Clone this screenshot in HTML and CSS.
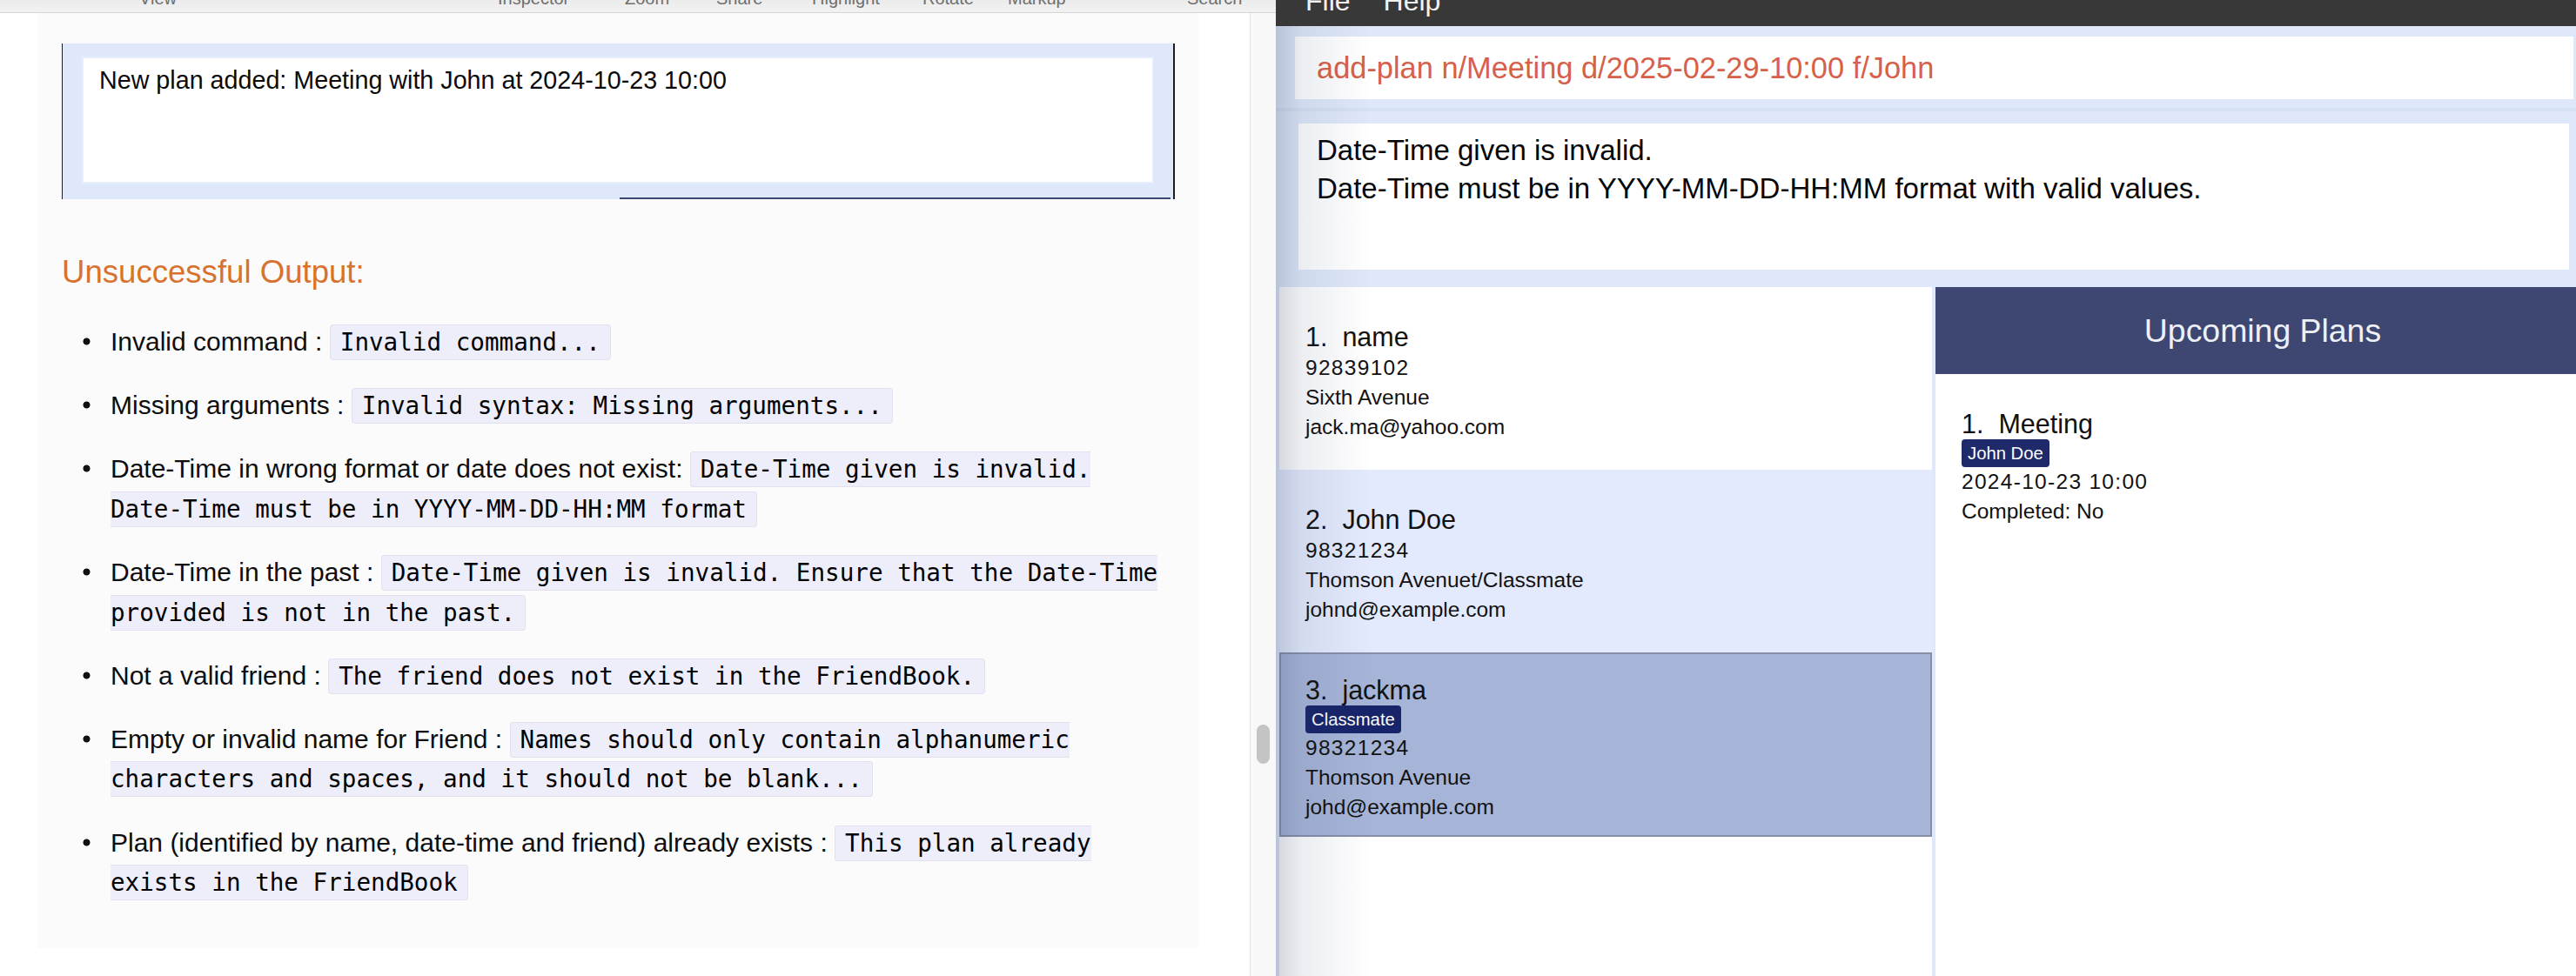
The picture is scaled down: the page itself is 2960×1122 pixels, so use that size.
FILE: index.html
```html
<!DOCTYPE html>
<html>
<head>
<meta charset="utf-8">
<title>FriendBook - add-plan</title>
<link rel="stylesheet" href="styles.css">
</head>
<body>
<div class="screen">
  <div class="viewer">
    <div class="toolbar">
      <span>View</span><span>Inspector</span><span>Zoom</span><span>Share</span><span>Highlight</span><span>Rotate</span><span>Markup</span><span>Search</span>
    </div>
    <div class="viewer-main">
      <div class="doc-area">
        <div class="page">
          <div class="shot">
            <div class="shot-box">New plan added: Meeting with John at 2024-10-23 10:00</div>
            <div class="shot-bar"></div>
          </div>
          <h3 class="heading">Unsuccessful Output:</h3>
          <ul class="errors">
            <li>Invalid command : <code>Invalid command...</code></li>
            <li>Missing arguments : <code>Invalid syntax: Missing arguments...</code></li>
            <li>Date-Time in wrong format or date does not exist: <code>Date-Time given is invalid. Date-Time must be in YYYY-MM-DD-HH:MM format</code></li>
            <li>Date-Time in the past : <code>Date-Time given is invalid. Ensure that the Date-Time provided is not in the past.</code></li>
            <li>Not a valid friend : <code>The friend does not exist in the FriendBook.</code></li>
            <li>Empty or invalid name for Friend : <code>Names should only contain alphanumeric characters and spaces, and it should not be blank...</code></li>
            <li>Plan (identified by name, date-time and friend) already exists : <code>This plan already exists in the FriendBook</code></li>
          </ul>
        </div>
      </div>
      <div class="scroll-track"><div class="scroll-thumb"></div></div>
    </div>
  </div>

  <div class="app">
    <div class="menubar"><span>File</span><span>Help</span></div>
    <div class="app-body">
      <div class="command">add-plan n/Meeting d/2025-02-29-10:00 f/John</div>
      <div class="result-wrap">
        <div class="result">Date-Time given is invalid.<br>Date-Time must be in YYYY-MM-DD-HH:MM format with valid values.</div>
      </div>
      <div class="panels">
        <div class="persons">
          <div class="card card-plain">
            <div class="name">1.&nbsp; name</div>
            <div class="line num">92839102</div>
            <div class="line">Sixth Avenue</div>
            <div class="line">jack.ma@yahoo.com</div>
          </div>
          <div class="card card-alt">
            <div class="name">2.&nbsp; John Doe</div>
            <div class="line num">98321234</div>
            <div class="line">Thomson Avenuet/Classmate</div>
            <div class="line">johnd@example.com</div>
          </div>
          <div class="card card-selected">
            <div class="name">3.&nbsp; jackma</div>
            <span class="tag">Classmate</span>
            <div class="line num">98321234</div>
            <div class="line">Thomson Avenue</div>
            <div class="line">johd@example.com</div>
          </div>
        </div>
        <div class="plans">
          <div class="plans-header">Upcoming Plans</div>
          <div class="plan-card">
            <div class="name">1.&nbsp; Meeting</div>
            <span class="tag tag-friend">John Doe</span>
            <div class="line num">2024-10-23 10:00</div>
            <div class="line">Completed: No</div>
          </div>
        </div>
      </div>
    </div>
    <div class="shade"></div>
  </div>
</div>
</body>
</html>
```

FILE: styles.css
```css
html, body {
  margin: 0;
  padding: 0;
}

body {
  width: 2960px;
  height: 1122px;
  overflow: hidden;
  background: #ffffff;
  font-family: "Liberation Sans", Arial, sans-serif;
  color: #111111;
}

.screen {
  display: flex;
  width: 2960px;
  height: 1122px;
}

/* ---------- left: document viewer ---------- */
.viewer {
  width: 1466px;
  flex: none;
  display: flex;
  flex-direction: column;
  background: #ffffff;
}

.toolbar {
  height: 14px;
  flex: none;
  border-bottom: 1px solid #d4d4d4;
  background: linear-gradient(#ebebeb, #f2f2f2);
  overflow: hidden;
  display: grid;
  grid-template-columns: 412px 146px 105px 110px 127px 98px 206px auto;
  padding-left: 160px;
  font-size: 20px;
  line-height: 20px;
  color: #6f6f6f;
}

.toolbar span {
  margin-top: -12px;
}

.viewer-main {
  flex: 1;
  display: flex;
  min-height: 0;
}

.doc-area {
  width: 1436px;
  flex: none;
  padding-left: 43px;
  box-sizing: border-box;
}

.page {
  width: 1334px;
  height: 1075px;
  background: #fbfbfc;
  padding: 35px 27px 0 28px;
  box-sizing: border-box;
}

.shot {
  border-left: 1px solid #1e1e1e;
  border-right: 2px solid #1e1e1e;
  background: #dfe8fa;
  padding-top: 15px;
}

.shot-box {
  margin: 0 22px;
  height: 146px;
  box-sizing: border-box;
  background: #ffffff;
  border: 2px solid #e6edfb;
  padding: 8px 18px;
  font-size: 28.7px;
  line-height: 34px;
  color: #0a0a0a;
}

.shot-bar {
  margin: 16px 0 0 640px;
  width: 633px;
  height: 2px;
  background: #3d4870;
}

.heading {
  margin: 62px 0 35px;
  font-size: 36.6px;
  line-height: 44px;
  font-weight: normal;
  color: #d8722f;
}

.errors {
  margin: 0;
  padding: 0;
  list-style: none;
  font-size: 30px;
  line-height: 45.5px;
  color: #0d0d0d;
}

.errors li {
  padding-left: 56px;
  margin-bottom: 27.7px;
  background: radial-gradient(circle, #111111 3.6px, rgba(17, 17, 17, 0) 4.4px) no-repeat 24px 18px / 9px 9px;
}

.errors code {
  font-family: "DejaVu Sans Mono", "Liberation Mono", monospace;
  font-size: 27.6px;
  line-height: 30px;
  color: #000000;
  background: #eeeefb;
  border: 1px solid #e1e1ef;
  border-radius: 4px;
  padding: 3px 11px;
}

.scroll-track {
  width: 30px;
  flex: none;
  border-left: 1px solid #e3e3e3;
  background: #f8f8f8;
  box-sizing: border-box;
}

.scroll-thumb {
  margin: 818px 0 0 7px;
  width: 15px;
  height: 45px;
  border-radius: 8px;
  background: #c4c4c4;
}

/* ---------- right: FriendBook app ---------- */
.app {
  flex: 1;
  position: relative;
  display: flex;
  flex-direction: column;
  background: #dfe8fa;
  min-width: 0;
}

.menubar {
  height: 30px;
  flex: none;
  background: #383838;
  color: #f2f2f2;
  display: flex;
  gap: 38px;
  padding-left: 34px;
  overflow: hidden;
  font-size: 32px;
  line-height: 32px;
}

.menubar span {
  margin-top: -15px;
}

.app-body {
  flex: 1;
  display: flex;
  flex-direction: column;
  min-height: 0;
}

.command {
  margin: 12px 3px 0 22px;
  height: 72px;
  flex: none;
  background: #ffffff;
  display: flex;
  align-items: center;
  padding-left: 25px;
  font-size: 34.4px;
  color: #d6604a;
}

.result-wrap {
  margin-top: 10px;
  border-top: 4px solid #d7e1f5;
  padding-top: 14px;
  flex: none;
}

.result {
  margin: 0 8px 0 26px;
  height: 168px;
  box-sizing: border-box;
  background: #ffffff;
  padding: 9px 21px;
  font-size: 33px;
  line-height: 44px;
  color: #050505;
}

.panels {
  margin: 20px 0 0 4px;
  flex: 1;
  display: flex;
  gap: 4px;
  min-height: 0;
}

.persons {
  width: 750px;
  flex: none;
  background: #ffffff;
  display: flex;
  flex-direction: column;
}

.card {
  height: 210px;
  flex: none;
  box-sizing: border-box;
  padding: 6px 30px 0;
  display: flex;
  flex-direction: column;
  justify-content: center;
  align-items: flex-start;
}

.card-plain {
  background: #ffffff;
}

.card-alt {
  background: #e3eafd;
}

.card-selected {
  height: 212px;
  background: #a5b4d7;
  border: 2px solid #858fa8;
  padding-left: 28px;
}

.name {
  font-size: 30.5px;
  line-height: 38px;
  color: #111111;
}

.line {
  font-size: 24.5px;
  line-height: 34px;
  color: #111111;
}

.num {
  letter-spacing: 1.3px;
}

.tag {
  display: inline-block;
  margin-top: -1px;
  height: 32px;
  line-height: 32px;
  padding: 0 7px;
  border-radius: 4px;
  background: #18246a;
  color: #ffffff;
  font-size: 20.3px;
}

.tag-friend {
  background: #1f2a6b;
}

.plans {
  flex: 1;
  background: #ffffff;
  display: flex;
  flex-direction: column;
}

.plans-header {
  height: 100px;
  flex: none;
  background: #3e4771;
  color: #eef0f7;
  display: flex;
  align-items: center;
  justify-content: center;
  padding-left: 16px;
  font-size: 37.4px;
}

.plan-card {
  padding: 38px 30px;
  display: flex;
  flex-direction: column;
  align-items: flex-start;
}

.shade {
  position: absolute;
  left: 0;
  top: 30px;
  bottom: 0;
  width: 110px;
  pointer-events: none;
  background: linear-gradient(to right, rgba(50, 65, 100, 0.22) 0, rgba(50, 65, 100, 0.09) 30px, rgba(50, 65, 100, 0) 100%);
}
```
